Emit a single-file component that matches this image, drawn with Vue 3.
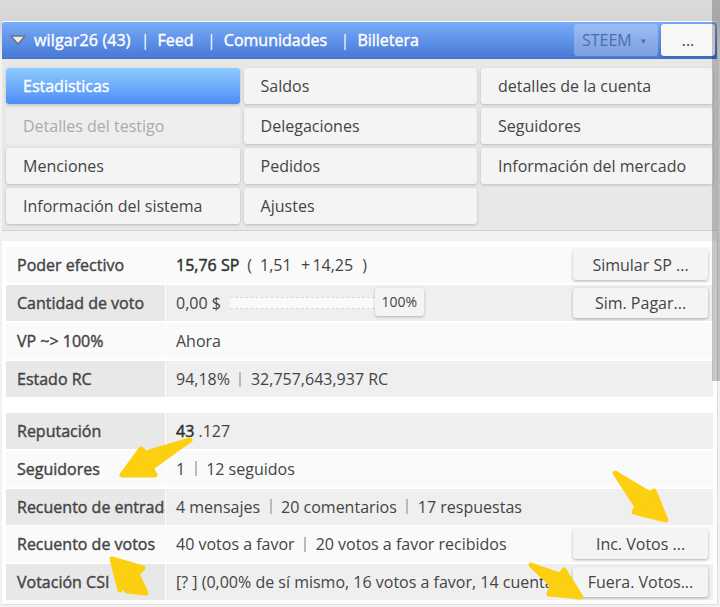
<template>
  <div class="page">
    <div class="card">
      <div class="topbar">
        <svg class="caret" width="18" height="12" viewBox="0 0 18 12">
          <path d="M2 2 H16 L9 10 Z" fill="#ececec" stroke="#6b7485" stroke-width="1.4" stroke-linejoin="round" />
        </svg>
        <span class="title">wilgar26 (43)</span>
        <span class="link">|</span><span class="link-text">Feed</span>
        <span class="link">|</span><span class="link-text">Comunidades</span>
        <span class="link">|</span><span class="link-text">Billetera</span>
        <div class="top-right">
          <div class="select">STEEM<i>▾</i></div>
          <button class="more">...</button>
        </div>
      </div>

      <div class="tabs">
        <div
          v-for="tab in tabs"
          :key="tab.name"
          class="tab"
          :class="{ active: tab.active, disabled: tab.disabled }"
        >{{ tab.name }}</div>
      </div>

      <div class="panel">
        <div v-for="(group, i) in groups" :key="i" class="group">
          <div v-for="row in group" :key="row.label" class="row" :class="{ 'has-btn': row.btn }">
            <div class="label">{{ row.label }}</div>
            <div class="value">
              <template v-if="row.type === 'power'">
                <b>15,76 SP</b><span class="paren">(</span><span>1,51</span><span class="plus">+ 14,25</span><span class="paren2">)</span>
              </template>
              <template v-else-if="row.type === 'vote'">
                <span>0,00 $</span>
                <div class="slider"><div class="knob">100%</div></div>
              </template>
              <template v-else-if="row.type === 'rep'">
                <b>43</b><span>&nbsp;.127</span>
              </template>
              <template v-else>
                <template v-for="(part, j) in row.parts" :key="j">
                  <span v-if="j > 0" class="sep"></span>
                  <span>{{ part }}</span>
                </template>
              </template>
            </div>
            <button v-if="row.btn" class="action">{{ row.btn }}</button>
          </div>
        </div>
      </div>
    </div>

    <div class="scrollbar"></div>

    <!-- yellow arrows drawn on top of the screenshot -->
    <svg class="arrows" width="720" height="607" viewBox="0 0 720 607">
      <g fill="#fccf10" stroke="#fccf10" stroke-width="5" stroke-linejoin="round" stroke-linecap="round">
        <path d="M190 440 L146 453 L141 449 L122 475 L155 475 L151 468 Z" />
        <path d="M112 559 L143 568 L137 574 L146 593 L127 591 L120 583 L120 590 Z" />
        <path d="M615 473 L650 494 L654 491 L666 520 L634 512 L637 507 Z" />
        <path d="M531 565 L560 575 L564 570 L581 597 L549 594 L552 585 Z" />
      </g>
    </svg>
  </div>
</template>

<script setup>
const tabs = [
  { name: 'Estadisticas', active: true },
  { name: 'Saldos' },
  { name: 'detalles de la cuenta' },
  { name: 'Detalles del testigo', disabled: true },
  { name: 'Delegaciones' },
  { name: 'Seguidores' },
  { name: 'Menciones' },
  { name: 'Pedidos' },
  { name: 'Información del mercado' },
  { name: 'Información del sistema' },
  { name: 'Ajustes' },
];

const groups = [
  [
    { label: 'Poder efectivo', type: 'power', btn: 'Simular SP ...' },
    { label: 'Cantidad de voto', type: 'vote', btn: 'Sim. Pagar...' },
    { label: 'VP ~> 100%', parts: ['Ahora'] },
    { label: 'Estado RC', parts: ['94,18%', '32,757,643,937 RC'] },
  ],
  [
    { label: 'Reputación', type: 'rep' },
    { label: 'Seguidores', parts: ['1', '12 seguidos'] },
    { label: 'Recuento de entradas', parts: ['4 mensajes', '20 comentarios', '17 respuestas'] },
    { label: 'Recuento de votos', parts: ['40 votos a favor', '20 votos a favor recibidos'], btn: 'Inc. Votos ...' },
    { label: 'Votación CSI', parts: ['[? ] (0,00% de sí mismo, 16 votos a favor, 14 cuentas'], btn: 'Fuera. Votos...' },
  ],
];
</script>

<style>
html,
body {
  margin: 0;
  overflow: hidden;
}
</style>

<style scoped>
.page {
  position: relative;
  width: 720px;
  height: 607px;
  overflow: hidden;
  box-sizing: border-box;
  padding: 21px 2px 0 2px;
  background: linear-gradient(#dadada, #d6d6d6 20px, #f2f2f2 60px);
  font-family: "Open Sans", sans-serif;
  font-size: 16px;
  color: #444;
}

.card {
  height: 583px;
  background: #e8e8e8;
  border-bottom: 1px solid #ddd;
  border-right: 1px solid #ddd;
}

.topbar {
  height: 38px;
  box-sizing: border-box;
  border-top: 1px solid #fff;
  border-bottom: 1px solid #4473c4;
  border-radius: 3px 3px 0 0;
  background: linear-gradient(#78acfb, #4779d6);
  display: flex;
  align-items: center;
  padding: 0 2px 0 7px;
  color: #fff;
  white-space: nowrap;
}

.caret {
  flex: none;
  margin-right: 7px;
}

.title,
.link-text {
  -webkit-text-stroke: 0.4px #fff;
}

.title {
  margin-right: 10px;
  letter-spacing: 0.15px;
}

.link {
  margin-right: 8px;
}

.link-text {
  margin-right: 13.5px;
}

.top-right {
  margin-left: auto;
  display: flex;
  align-items: center;
  gap: 3px;
}

.select {
  width: 84px;
  height: 32px;
  box-sizing: border-box;
  padding-left: 8px;
  border-radius: 3px;
  background: rgba(220, 225, 235, 0.35);
  color: #4a6ea8;
  line-height: 32px;
}

.select i {
  font-style: normal;
  font-size: 9px;
  margin-left: 9px;
  vertical-align: 2px;
}

.more {
  width: 54px;
  height: 32px;
  border: none;
  border-radius: 3px;
  background: #f7f7f7;
  box-shadow: 0 1px 3px rgba(0, 0, 0, 0.2);
  color: #444;
  font-family: inherit;
  font-size: 16px;
  padding: 0;
}

.tabs {
  display: grid;
  grid-template-columns: 233.6px 233.4px 232px;
  grid-auto-rows: 36px;
  gap: 4px;
  padding: 9px 0 6px 4px;
  border-bottom: 1px solid #d2d2d2;
}

.tab {
  background: #f4f4f4;
  border-radius: 3px;
  box-shadow: 0 1px 3px rgba(0, 0, 0, 0.2);
  padding-left: 17px;
  line-height: 36px;
}

.tab.active {
  background: linear-gradient(#8ecbff, #4e8df8);
  color: #fff;
  -webkit-text-stroke: 0.4px #fff;
}

.tab.disabled {
  background: #eee;
  color: #aaa;
  box-shadow: none;
}

.panel {
  height: 373px;
  background: #fff;
  padding: 6px 4px 0 4px;
  box-sizing: border-box;
  border-top: 10px solid #f2f2f2;
}

.group {
  display: flex;
  flex-direction: column;
  gap: 2px;
}

.group + .group {
  margin-top: 16px;
  gap: 1.75px;
}

.row {
  display: flex;
  align-items: center;
  height: 36px;
  background: #fafafa;
  position: relative;
}

.row:nth-child(even) {
  background: #efefef;
}

.group + .group .row:nth-child(even) {
  background: #fafafa;
}

.group + .group .row:nth-child(odd) {
  background: #efefef;
}

.label {
  width: 160px;
  flex: none;
  box-sizing: border-box;
  padding-left: 11px;
  height: 100%;
  line-height: 36px;
  overflow: hidden;
  white-space: nowrap;
  -webkit-text-stroke: 0.4px #444;
  background: #fafafa;
  border-right: 1px solid #fff;
}

.row:nth-child(even) .label {
  background: #e8e8e8;
}

.group + .group .row:nth-child(even) .label {
  background: #fafafa;
}

.group + .group .row:nth-child(odd) .label {
  background: #e8e8e8;
}

.value {
  flex: 1;
  min-width: 0;
  padding-left: 10px;
  display: flex;
  align-items: center;
  white-space: nowrap;
  overflow: hidden;
}

.has-btn .value {
  margin-right: 143px;
}

.value b {
  font-weight: 400;
  color: #333;
  -webkit-text-stroke: 0.5px #333;
}

.paren {
  margin: 0 8px;
}

.plus {
  margin-left: 9.5px;
  word-spacing: -2px;
}

.paren2 {
  margin-left: 9px;
}

.sep {
  width: 2px;
  height: 15px;
  background: #bbb;
  margin: 0 9.5px;
  flex: none;
}

.value:has(.slider) {
  overflow: visible;
}

.slider {
  position: relative;
  width: 145px;
  height: 10px;
  margin-left: 9px;
  border-top: 1px dashed #d8d8d8;
  border-bottom: 1px dashed #d8d8d8;
  background: #fafafa;
}

.knob {
  position: absolute;
  right: -49px;
  top: -10px;
  width: 49px;
  height: 28px;
  text-align: center;
  line-height: 28px;
  font-size: 14px;
  background: #f4f4f4;
  border-radius: 3px;
  box-shadow: 0 1px 3px rgba(0, 0, 0, 0.25);
}

.action {
  position: absolute;
  right: 5px;
  top: 3px;
  width: 135px;
  height: 29.5px;
  border: none;
  border-radius: 3px;
  background: #f4f4f4;
  box-shadow: 0 1px 3px rgba(0, 0, 0, 0.3);
  color: #444;
  font-family: inherit;
  font-size: 16px;
  padding: 0;
}

.scrollbar {
  position: absolute;
  top: 0;
  right: 0;
  width: 8px;
  height: 381px;
  background: rgba(0, 0, 0, 0.22);
}

.arrows {
  position: absolute;
  left: 0;
  top: 0;
  pointer-events: none;
}
</style>
